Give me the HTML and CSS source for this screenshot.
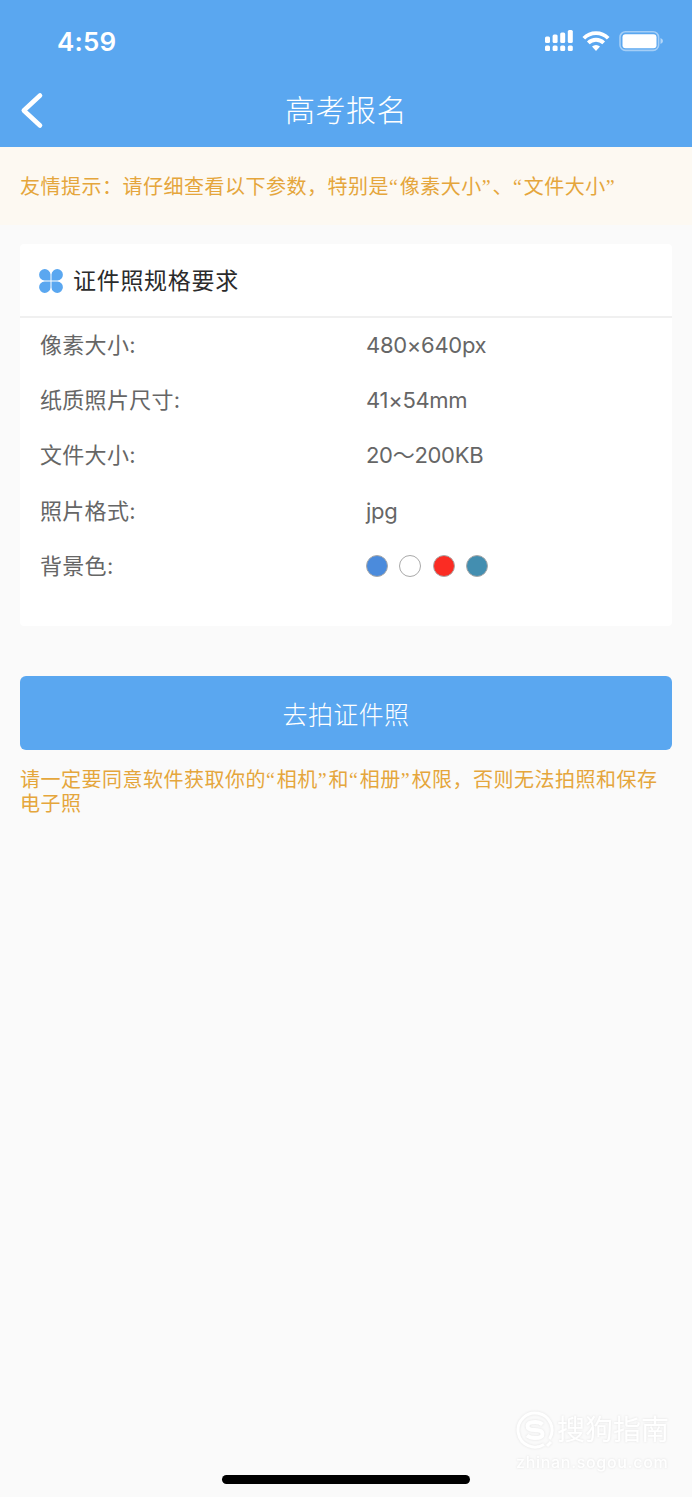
FILE: index.html
```html
<!DOCTYPE html>
<html lang="zh-CN">
<head>
<meta charset="utf-8">
<title>高考报名</title>
<link rel="stylesheet" href="styles.css">
</head>
<body>
<div class="screen">
  <header class="header">
    <div class="status">
      <span class="time">4:59</span>
      <svg class="status-icons" width="120" height="26" viewBox="0 0 120 26" fill="#fff">
        <rect x="1" y="8.5" width="5" height="6.5" rx="1.5"/><rect x="8.6" y="6.5" width="5" height="8.5" rx="1.5"/><rect x="16.2" y="4.5" width="5" height="10.5" rx="1.5"/><rect x="23.8" y="2" width="5" height="13" rx="1.5"/>
        <rect x="1" y="17.5" width="5" height="5.5" rx="1.5"/><rect x="8.6" y="17.5" width="5" height="5.5" rx="1.5"/><rect x="16.2" y="17.5" width="5" height="5.5" rx="1.5"/><rect x="23.8" y="17.5" width="5" height="5.5" rx="1.5"/>
        <g fill="none" stroke="#fff" stroke-width="3.8"><path d="M39.8 10.2a17 17 0 0 1 24.4 0"/><path d="M44.3 14.9a11 11 0 0 1 15.4 0"/></g>
        <path d="M48 18.6a6 6 0 0 1 8 0l-4 4.4z"/>
        <rect x="76" y="3.8" width="38.6" height="18.6" rx="5.5" fill="none" stroke="#fff" stroke-opacity=".45" stroke-width="1.6"/>
        <rect x="78.5" y="6.3" width="34" height="14" rx="3"/>
        <path d="M116.5 10q2.5 1 2.5 3t-2.5 3z" opacity=".55"/>
      </svg>
    </div>
    <div class="nav">
      <svg class="back" width="24" height="38" viewBox="0 0 24 38" fill="none" stroke="#fff" stroke-width="4.6" stroke-linecap="round" stroke-linejoin="round"><path d="M20 3.5 3.8 18.5 20 33.5"/></svg>
      <h1 class="title">高考报名</h1>
    </div>
  </header>
  <p class="tip">友情提示：请仔细查看以下参数，特别是<span class="q">“</span>像素大小<span class="q">”</span>、<span class="q">“</span>文件大小<span class="q">”</span></p>
  <section class="card">
    <div class="card-head">
      <svg width="24" height="24" viewBox="0 0 24 24" fill="#5aa7f0">
        <path d="M11.5 11.5H5.6A5.7 5.7 0 1 1 11.5 5.6zM12.5 11.5V5.6a5.7 5.7 0 1 1 5.9 5.9zM11.5 12.5v5.9a5.7 5.7 0 1 1-5.9-5.9zM12.5 12.5h5.9a5.7 5.7 0 1 1-5.9 5.9z"/>
      </svg>
      <h2 class="card-title">证件照规格要求</h2>
    </div>
    <dl class="specs">
      <dt>像素大小:</dt><dd>480×640px</dd>
      <dt>纸质照片尺寸:</dt><dd>41×54mm</dd>
      <dt>文件大小:</dt><dd>20～200KB</dd>
      <dt>照片格式:</dt><dd>jpg</dd>
      <dt>背景色:</dt>
      <dd class="colors"><i class="dot blue"></i><i class="dot white"></i><i class="dot red"></i><i class="dot teal"></i></dd>
    </dl>
  </section>
  <button class="action">去拍证件照</button>
  <p class="note">请一定要同意软件获取你的<span class="q">“</span>相机<span class="q">”</span>和<span class="q">“</span>相册<span class="q">”</span>权限，否则无法拍照和保存电子照</p>
  <footer class="footer">
    <div class="watermark">
      <div class="brand">
        <svg width="38" height="38" viewBox="0 0 38 38" fill="none" stroke="#fff" stroke-width="3"><path d="M28 33.5A17 17 0 1 1 33.5 28M31 35l4-4"/><path d="M26.5 13.5Q24 11 19 11q-7.5 0-7.5 4t7.5 4 7.5 4-7.5 4q-5 0-8-2.5" stroke-width="4"/></svg>
        <span class="brand-name">搜狗指南</span>
      </div>
      <div class="domain">zhinan.sogou.com</div>
    </div>
    <div class="home-bar"></div>
  </footer>
</div>
</body>
</html>
```
FILE: styles.css
```css
* { box-sizing: border-box; }
body, h1, h2, p, dl, dd { margin: 0; }
body {
  background: #fafafa;
  font-family: Inter, "Noto Sans CJK SC", sans-serif;
}
.screen { display: flex; flex-direction: column; height: 1497px; }
.header { height: 147px; background: #5aa7f0; color: #fff; }
.status {
  display: flex;
  justify-content: space-between;
  align-items: center;
  height: 74px;
  padding: 8px 28px 0 57px;
}
.time { font-size: 26px; font-weight: 600; letter-spacing: .2px; }
.nav {
  display: grid;
  grid-template-columns: 60px 1fr 60px;
  align-items: center;
  height: 73px;
}
.back { margin-left: 20px; }
.title {
  text-align: center;
  font-size: 30px;
  font-weight: 300;
  letter-spacing: .5px;
  line-height: 73px;
}
/* The serif face supplies only the narrow curly quotes. */
.tip, .note {
  color: #e5a63c;
  font-family: "Liberation Serif", "Noto Sans CJK SC", sans-serif;
  font-size: 20px;
  letter-spacing: .5px;
}
.q { letter-spacing: 1.9px; }
.tip {
  height: 78px;
  padding: 2px 0 0 20px;
  background: #fdf9f2;
  line-height: 76px;
  white-space: nowrap;
}
.card { height: 382px; margin: 19px 20px 0; border-radius: 4px; background: #fff; }
.card-head {
  display: flex;
  align-items: center;
  gap: 10px;
  height: 74px;
  padding: 1px 0 0 19px;
  border-bottom: 2px solid #f0f0f0;
}
.card-title { color: #2b2b2b; font-size: 23px; font-weight: 400; letter-spacing: .7px; line-height: 70px; padding-top: 1px; }
.specs {
  display: grid;
  grid-template-columns: 326px 1fr;
  grid-auto-rows: 55.2px;
  padding-left: 20px;
  color: #666;
  font-size: 22px;
  line-height: 54px;
}
dt { letter-spacing: .3px; }
dd { letter-spacing: -.3px; }
.colors { display: flex; align-items: center; gap: 11.3px; }
.dot { width: 22px; height: 22px; border: 1px solid #a9a9a9; border-radius: 50%; }
.blue { background: #4b8bdc; }
.white { background: #fff; }
.red { background: #fb2c23; }
.teal { background: #438eb0; }
.action {
  height: 74px;
  margin: 50px 20px 0;
  padding: 0;
  border: 0;
  border-radius: 6px;
  background: #5aa7f0;
  color: #fff;
  font: 300 25px Inter, "Noto Sans CJK SC", sans-serif;
  letter-spacing: .4px;
}
.note { margin: 18px 20px 0; line-height: 24px; }
.footer { display: flex; flex-direction: column; margin-top: auto; padding-bottom: 13px; }
.watermark {
  align-self: flex-end;
  width: 154px;
  margin-right: 22px;
  padding-bottom: 1px;
  color: #fff;
  filter: drop-shadow(0 0 1px #e2e2e2);
}
.brand { display: flex; align-items: center; gap: 3px; height: 40px; }
.brand-name { font-size: 28px; line-height: 36px; white-space: nowrap; }
.domain { font-size: 16px; font-weight: 500; letter-spacing: .7px; line-height: 24px; white-space: nowrap; }
.home-bar { align-self: center; width: 248px; height: 9px; border-radius: 5px; background: #000; }
```
